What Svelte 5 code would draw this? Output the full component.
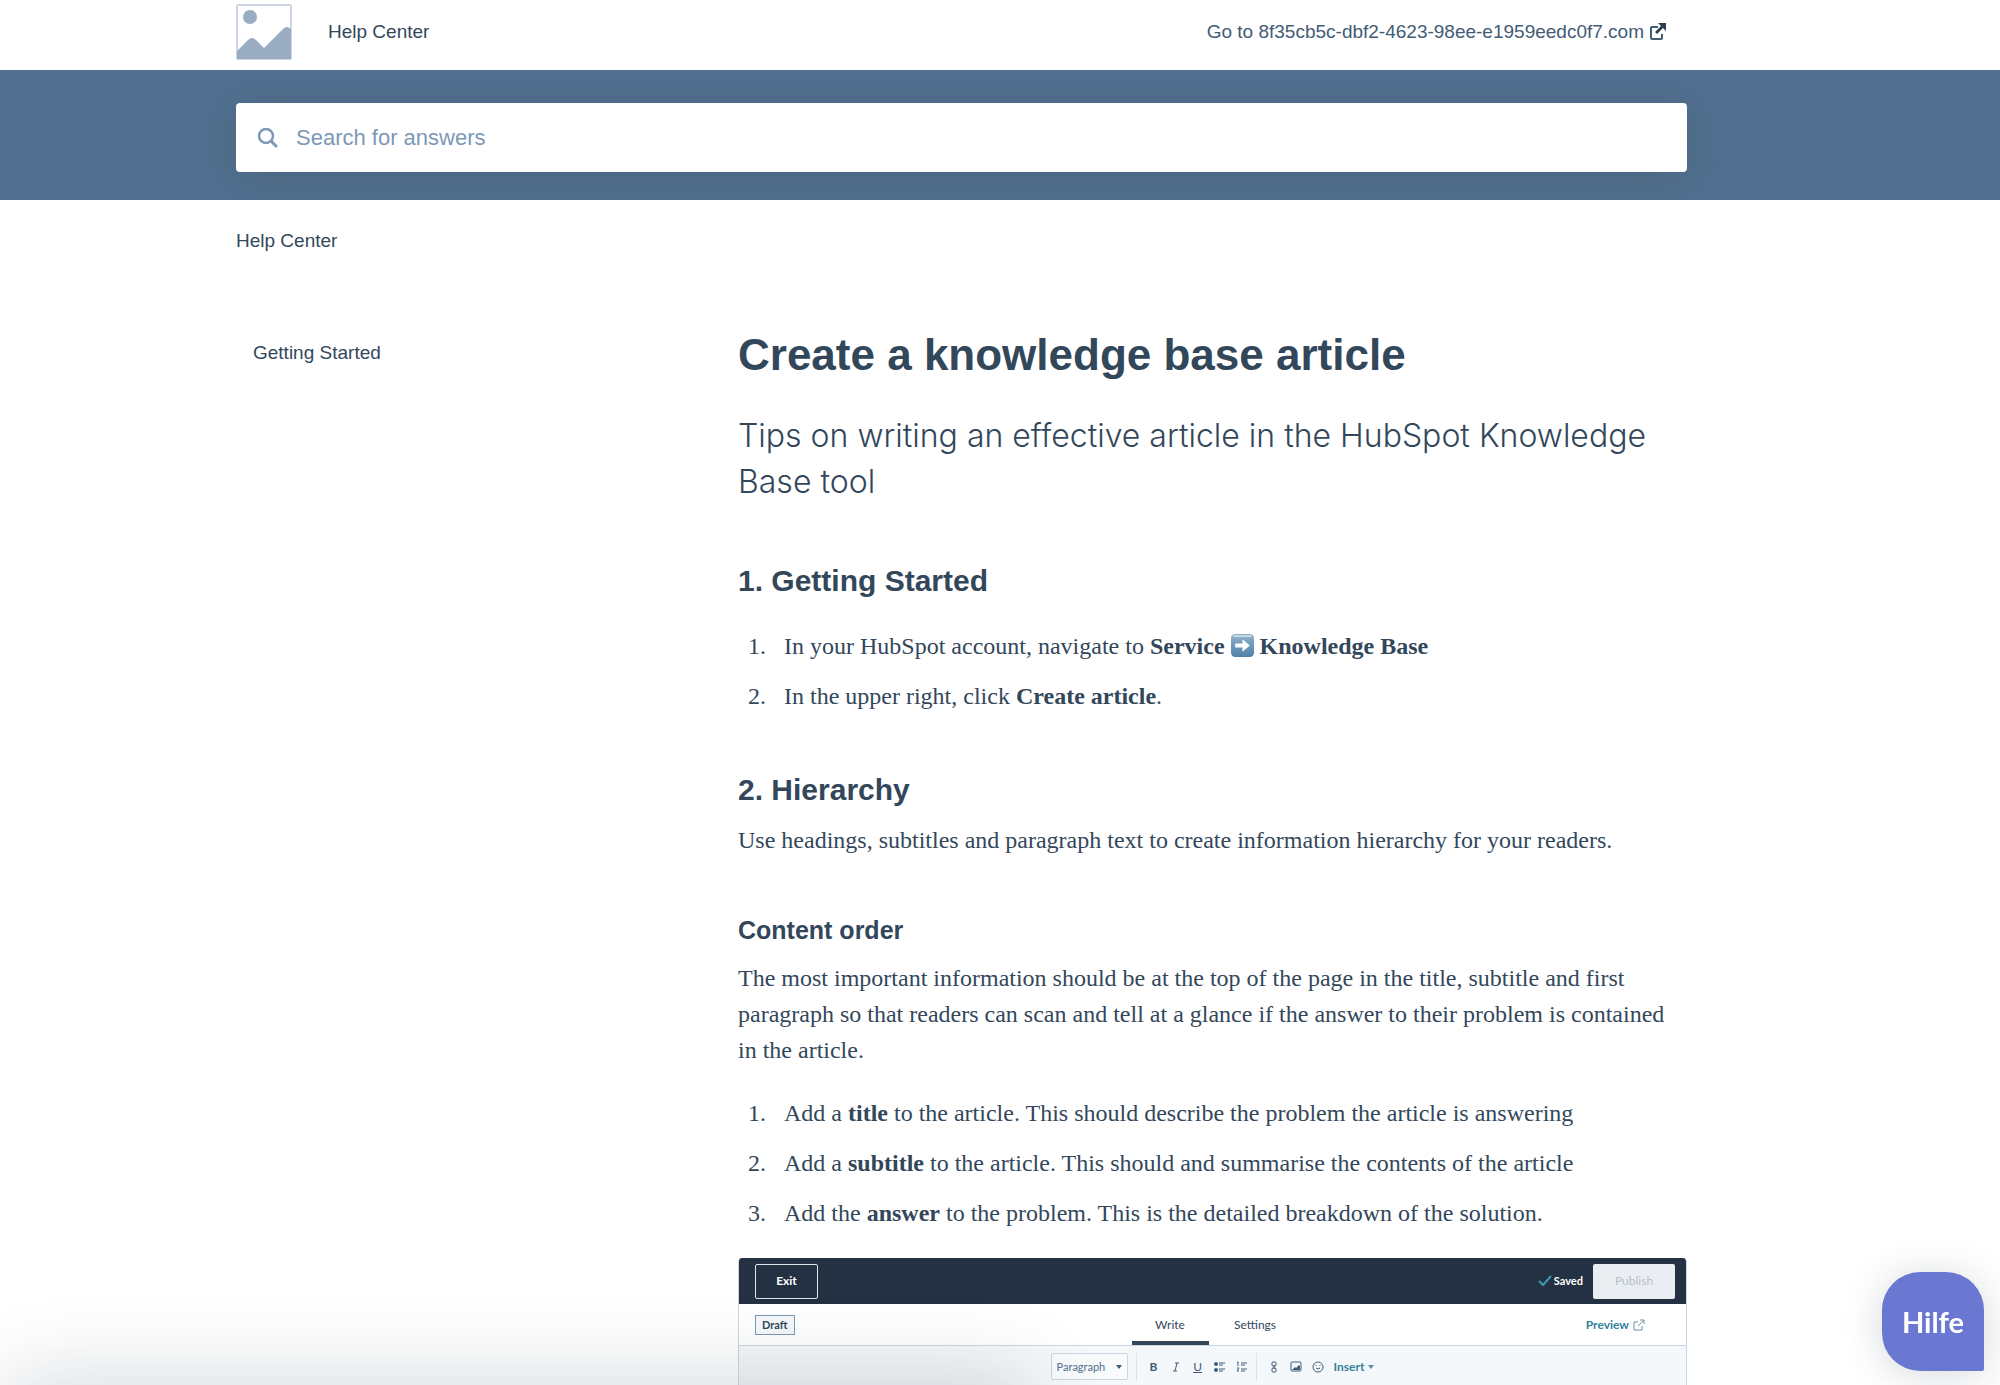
<script>
  let query = $state("");

  const intro = "Tips on writing an effective article in the HubSpot Knowledge Base tool";
</script>

<header class="site-header">
  <div class="wrap header-row">
    <a class="brand" href="/" aria-label="Home">
      <svg class="logo" viewBox="0 0 56 56" aria-hidden="true">
        <rect x="1" y="1" width="54" height="54" rx="1" fill="#fff" stroke="#cbd6e2" stroke-width="2" />
        <circle cx="14" cy="13" r="7" fill="#99acc2" />
        <path d="M1 47 L12 36 Q16 32 20 36 L28 44 L47 25 Q51 21 55 25 V55 H1 Z" fill="#99acc2" />
      </svg>
    </a>
    <a class="title" href="/">Help Center</a>
    <a class="site-link" href="/">
      Go to 8f35cb5c-dbf2-4623-98ee-e1959eedc0f7.com
      <svg viewBox="0 0 18 18" width="18" height="18" aria-hidden="true">
        <path d="M9 4 H3 Q2 4 2 5 V15 Q2 16 3 16 H12 Q13 16 13 15 V11" fill="none" stroke="currentColor" stroke-width="2" />
        <path d="M9 0 H17 V8 L14 5 L8 11 L6 9 L12 3 Z" fill="#2d3e50" />
      </svg>
    </a>
  </div>
</header>

<section class="search-band">
  <form class="wrap" role="search">
    <label class="search">
      <svg viewBox="0 0 20 20" width="20" height="20" aria-hidden="true">
        <circle cx="8" cy="8" r="7" fill="none" stroke="currentColor" stroke-width="2.5" />
        <path d="M13 13 L18 18" stroke="currentColor" stroke-width="3" stroke-linecap="round" />
      </svg>
      <input type="text" placeholder="Search for answers" aria-label="Search for answers" bind:value={query} />
    </label>
  </form>
</section>

<nav class="wrap breadcrumb" aria-label="Breadcrumb">
  <a href="/">Help Center</a>
</nav>

<main class="wrap columns">
  <aside>
    <a href="/">Getting Started</a>
  </aside>

  <article>
    <h1>Create a knowledge base article</h1>
    <p class="intro">{intro}</p>

    <h2>1. Getting Started</h2>
    <ol>
      <li>
        In your HubSpot account, navigate to <strong>Service
        <svg class="emoji" viewBox="0 0 22 22" role="img" aria-label="right arrow">
          <defs>
            <linearGradient id="tile" x1="0" y1="0" x2="0" y2="1">
              <stop offset="0" stop-color="#8fb2cc" />
              <stop offset="1" stop-color="#4f7fa8" />
            </linearGradient>
          </defs>
          <rect width="22" height="22" rx="4" fill="url(#tile)" />
          <rect x="2" y="1" width="18" height="2" rx="1" fill="#c3d6e4" />
          <path d="M4 9 H11 V5 L18 11 L11 17 V13 H4 Z" fill="#fff" />
        </svg>
        Knowledge Base</strong>
      </li>
      <li>In the upper right, click <strong>Create article</strong>.</li>
    </ol>

    <h2>2. Hierarchy</h2>
    <p>Use headings, subtitles and paragraph text to create information hierarchy for your readers.</p>

    <h3>Content order</h3>
    <p>
      The most important information should be at the top of the page in the title, subtitle and first
      paragraph so that readers can scan and tell at a glance if the answer to their problem is contained
      in the article.
    </p>
    <ol>
      <li>Add a <strong>title</strong> to the article. This should describe the problem the article is answering</li>
      <li>Add a <strong>subtitle</strong> to the article. This should and summarise the contents of the article</li>
      <li>Add the <strong>answer</strong> to the problem. This is the detailed breakdown of the solution.</li>
    </ol>

    <div class="editor">
      <div class="editor-top">
        <button class="exit" type="button">Exit</button>
        <span class="saved">
          <svg viewBox="0 0 14 12" width="14" height="12" aria-hidden="true">
            <path d="M1 6 L5 10 L13 1" fill="none" stroke="#3a9bb0" stroke-width="2" />
          </svg>
          Saved
        </span>
        <button class="publish" type="button" disabled>Publish</button>
      </div>

      <div class="editor-tabs">
        <span class="draft">Draft</span>
        <div class="tabs">
          <button class="active" type="button">Write</button>
          <button type="button">Settings</button>
        </div>
        <a class="preview" href="/">
          Preview
          <svg viewBox="0 0 12 12" width="12" height="12" fill="none" stroke="#6f93a8" aria-hidden="true">
            <path d="M5 3 H1 V11 H9 V7 M7 1 H11 V5 M11 1 L5 7" />
          </svg>
        </a>
      </div>

      <div class="toolbar">
        <div class="text-style">
          <select aria-label="Text style">
            <option>Paragraph</option>
          </select>
          <svg viewBox="0 0 6 4" width="6" height="4" aria-hidden="true"><path d="M0 0 H6 L3 4 Z" fill="currentColor" /></svg>
        </div>
        <div class="group">
          <button type="button" aria-label="Bold"><b>B</b></button>
          <button class="italic" type="button" aria-label="Italic">
            <svg viewBox="0 0 12 12" width="12" height="12" fill="none" stroke="currentColor" aria-hidden="true">
              <path d="M5 2 H9 M3 10 H7 M7 2 L5 10" />
            </svg>
          </button>
          <button type="button" aria-label="Underline"><u>U</u></button>
          <button type="button" aria-label="Bulleted list">
            <svg viewBox="0 0 12 12" width="12" height="12" aria-hidden="true">
              <circle cx="2" cy="3" r="2" fill="currentColor" />
              <circle cx="2" cy="9" r="2" fill="currentColor" />
              <path d="M5 2 H11 M5 4 H9 M5 8 H11 M5 10 H9" stroke="currentColor" />
            </svg>
          </button>
          <button type="button" aria-label="Numbered list">
            <svg viewBox="0 0 12 12" width="12" height="12" fill="none" stroke="currentColor" aria-hidden="true">
              <path d="M1 1 H2 V5 M1 7 H3 L1 10 H3 M5 2 H11 M5 4 H9 M5 8 H11 M5 10 H9" />
            </svg>
          </button>
        </div>
        <div class="group">
          <button type="button" aria-label="Link">
            <svg viewBox="0 0 12 12" width="12" height="12" fill="none" stroke="currentColor" aria-hidden="true">
              <rect x="4" y="1" width="4" height="4" rx="1" />
              <rect x="4" y="7" width="4" height="4" rx="1" />
              <path d="M6 4 V8" />
            </svg>
          </button>
          <button type="button" aria-label="Image">
            <svg viewBox="0 0 12 12" width="12" height="12" aria-hidden="true">
              <rect x="1" y="1" width="10" height="9" rx="1" fill="none" stroke="currentColor" />
              <path d="M2 9 L5 6 L6 7 L9 4 L10 5 V9 Z" fill="currentColor" />
            </svg>
          </button>
          <button type="button" aria-label="Emoji">
            <svg viewBox="0 0 12 12" width="12" height="12" fill="none" stroke="currentColor" aria-hidden="true">
              <circle cx="6" cy="6" r="5" />
              <path d="M4 4 V5 M8 4 V5 M4 7 Q6 9 8 7" />
            </svg>
          </button>
          <button class="insert" type="button">
            Insert
            <svg viewBox="0 0 6 4" width="6" height="4" aria-hidden="true"><path d="M0 0 H6 L3 4 Z" fill="#5c8ea6" /></svg>
          </button>
        </div>
      </div>
    </div>
  </article>
</main>

<div class="bottom-shade"></div>
<button class="help" type="button">Hilfe</button>

<style>
  :global(body) {
    margin: 0;
    background: #ffffff;
    color: #33475b;
    font-family: "Liberation Sans", Arial, sans-serif;
    font-size: 19px;
    line-height: 24px;
    overflow: hidden;
  }

  a {
    color: inherit;
    text-decoration: none;
  }

  button {
    padding: 0;
    border: none;
    background: none;
    color: inherit;
    font: inherit;
    cursor: pointer;
  }

  .wrap {
    box-sizing: border-box;
    padding-left: 236px;
    padding-right: 313px;
  }

  .header-row {
    display: flex;
    align-items: center;
    box-sizing: border-box;
    height: 70px;
    padding-bottom: 6px;
  }

  .brand,
  .logo {
    display: block;
    width: 56px;
    height: 56px;
  }

  .title {
    margin-left: 36px;
  }

  .site-link {
    display: flex;
    align-items: center;
    gap: 5px;
    margin-left: auto;
    padding-right: 20px;
    color: #425b76;
  }

  .search-band {
    padding: 33px 0 28px;
    background: #516f90;
    overflow: hidden;
  }

  .search {
    display: flex;
    align-items: center;
    gap: 18px;
    height: 69px;
    padding: 0 22px;
    border-radius: 4px;
    background: #ffffff;
    color: #7c98b6;
    box-shadow: 0 5px 40px rgba(70, 95, 105, 0.5);
  }

  .search input {
    flex: 1;
    padding: 0;
    border: none;
    outline: none;
    background: none;
    color: #33475b;
    font: inherit;
    font-size: 22px;
  }

  .search input::placeholder {
    color: #7c98b6;
    opacity: 1;
  }

  .breadcrumb {
    padding-top: 29px;
  }

  .columns {
    display: grid;
    grid-template-columns: 502px 1fr;
    padding-top: 76px;
  }

  aside {
    padding: 12px 17px;
  }

  h1,
  h2,
  h3,
  p,
  ol {
    margin: 0;
  }

  h1 {
    font-size: 44px;
    line-height: 52px;
  }

  h2 {
    margin-top: 58px;
    font-size: 30px;
    line-height: 36px;
  }

  h3 {
    margin-top: 54px;
    font-size: 25px;
    line-height: 36px;
  }

  p,
  ol {
    font-family: Georgia, "Liberation Serif", serif;
    font-size: 24px;
    line-height: 36px;
  }

  h2 + p {
    margin-top: 14px;
  }

  h3 + p {
    margin-top: 12px;
  }

  .intro {
    margin-top: 32px;
    font-family: "Helvetica Neue", Inter, sans-serif;
    font-size: 32px;
    font-weight: 300;
    line-height: 46px;
  }

  ol {
    margin-top: 29px;
    padding-left: 46px;
  }

  p + ol {
    margin-top: 27px;
  }

  li + li {
    margin-top: 14px;
  }

  li::marker {
    content: counter(list-item) ".\2002\00a0";
  }

  .emoji {
    width: 23px;
    height: 23px;
    vertical-align: -3px;
  }

  .editor {
    margin-top: 27px;
    border: 1px solid #cbd6e2;
    border-top: none;
    border-radius: 4px 4px 0 0;
    font-family: Lato, sans-serif;
    font-size: 12px;
    line-height: 16px;
    overflow: hidden;
  }

  .editor-top {
    display: flex;
    align-items: center;
    height: 46px;
    padding: 0 11px 0 16px;
    background: #233143;
    color: #ffffff;
  }

  .exit {
    width: 63px;
    height: 35px;
    border: 1px solid #dfe5ea;
    border-radius: 2px;
    font-weight: 700;
  }

  .saved {
    display: flex;
    align-items: center;
    gap: 2px;
    margin-left: auto;
    font-size: 11px;
    font-weight: 700;
  }

  .publish {
    width: 82px;
    height: 35px;
    margin-left: 10px;
    border-radius: 2px;
    background: #eaeef2;
    color: #b4bfcc;
  }

  .editor-tabs {
    display: grid;
    grid-template-columns: 1fr auto 1fr;
    align-items: center;
    height: 41px;
    padding: 0 16px;
    border-bottom: 1px solid #cbd6e2;
    background: #ffffff;
  }

  .draft {
    justify-self: start;
    padding: 1px 6px;
    border: 1px solid #7c98b6;
    background: #f5f8fa;
    font-size: 11px;
    font-weight: 700;
  }

  .tabs {
    display: flex;
    align-self: stretch;
    gap: 8px;
  }

  .tabs button {
    width: 77px;
    border-top: 4px solid transparent;
    border-bottom: 4px solid transparent;
  }

  .tabs .active {
    border-bottom-color: #33475b;
  }

  .preview {
    display: flex;
    align-items: center;
    gap: 4px;
    justify-self: end;
    margin-right: 25px;
    color: #33819b;
    font-weight: 700;
  }

  .toolbar {
    display: flex;
    align-items: center;
    justify-content: center;
    height: 41px;
    background: #f5f8fa;
    color: #425b76;
  }

  .text-style {
    position: relative;
  }

  .text-style select {
    display: block;
    width: 77px;
    height: 27px;
    padding: 0 5px;
    border: 1px solid #cbd6e2;
    border-radius: 2px;
    background: #f8fafc;
    color: #516f90;
    font: inherit;
    font-size: 11px;
    appearance: none;
  }

  .text-style svg {
    position: absolute;
    top: 12px;
    right: 6px;
    pointer-events: none;
  }

  .group {
    display: flex;
    align-items: center;
    gap: 10px;
    margin-left: 8px;
    padding-left: 11px;
    border-left: 1px solid #dfe3eb;
  }

  .group button {
    display: flex;
    align-items: center;
    justify-content: center;
    min-width: 12px;
    height: 28px;
  }

  .group .insert {
    gap: 4px;
    color: #33819b;
    font-weight: 700;
  }

  .bottom-shade {
    position: fixed;
    top: 100%;
    left: 20px;
    width: 1000px;
    height: 100px;
    box-shadow: 0 0 80px 10px rgba(45, 62, 80, 0.18);
  }

  .help {
    position: fixed;
    right: 16px;
    bottom: 14px;
    width: 102px;
    height: 99px;
    border-radius: 38px 38px 2px 38px;
    background: #6a78d1;
    color: #ffffff;
    font-family: Lato, sans-serif;
    font-size: 29px;
    font-weight: 700;
    box-shadow: 0 4px 40px rgba(45, 62, 80, 0.2);
  }
</style>
